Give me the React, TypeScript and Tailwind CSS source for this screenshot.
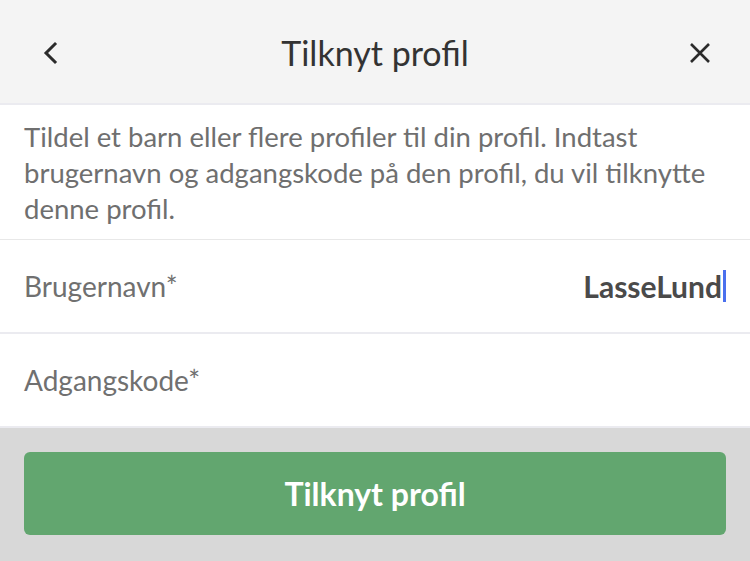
import React from "react"

function ChevronLeft() {
  return (
    <svg width="16" height="24" viewBox="0 0 16 24" fill="none">
      <path d="M13 3 L4 12 L13 21" stroke="#2b2b2b" strokeWidth="3" strokeLinecap="square" />
    </svg>
  )
}

function CloseIcon() {
  return (
    <svg width="24" height="24" viewBox="0 0 24 24" fill="none">
      <path d="M3 3 L21 21 M21 3 L3 21" stroke="#2b2b2b" strokeWidth="2.6" />
    </svg>
  )
}

export default function App() {
  return (
    <div className="w-[750px] h-[561px] flex flex-col bg-[#d8d8d8] overflow-hidden" style={{ fontFamily: "Lato, 'Open Sans', sans-serif" }}>
      <header className="h-[105px] shrink-0 flex items-center justify-between bg-[#f4f4f4] border-b-2 border-[#ebebf0] px-[38px]">
        <button className="w-[24px] flex items-center justify-center pt-[2px]">
          <ChevronLeft />
        </button>
        <h1 className="text-[34px] text-[#333333] pt-[2px]">Tilknyt profil</h1>
        <button className="w-[24px] flex items-center justify-center pt-[2px]">
          <CloseIcon />
        </button>
      </header>

      <div className="bg-white">
        <p className="h-[135px] px-[24px] pt-[14px] text-[27.5px] leading-[36px] text-[#6f6f6f] border-b border-[#e8e8e8]">
          Tildel et barn eller flere profiler til din profil. Indtast brugernavn og adgangskode på den profil, du vil tilknytte denne profil.
        </p>
        <div className="h-[94px] flex items-center justify-between px-[24px] border-b-2 border-[#ebebf0]">
          <span className="text-[28px] text-[#707070]">Brugernavn*</span>
          <span className="flex items-center text-[30px] font-bold text-[#4a4a4a]">
            LasseLund
            <span className="w-[3px] h-[32px] bg-[#4a70ee] ml-[1px]"></span>
          </span>
        </div>
        <div className="h-[94px] flex items-center px-[24px] border-b-2 border-[#ebebf0]">
          <span className="text-[28px] text-[#707070]">Adgangskode*</span>
        </div>
      </div>

      <div className="px-[24px] pt-[24px]">
        <button className="w-full h-[83px] rounded-[6px] bg-[#62a66f] text-white text-[32px] font-bold">
          Tilknyt profil
        </button>
      </div>
    </div>
  )
}
